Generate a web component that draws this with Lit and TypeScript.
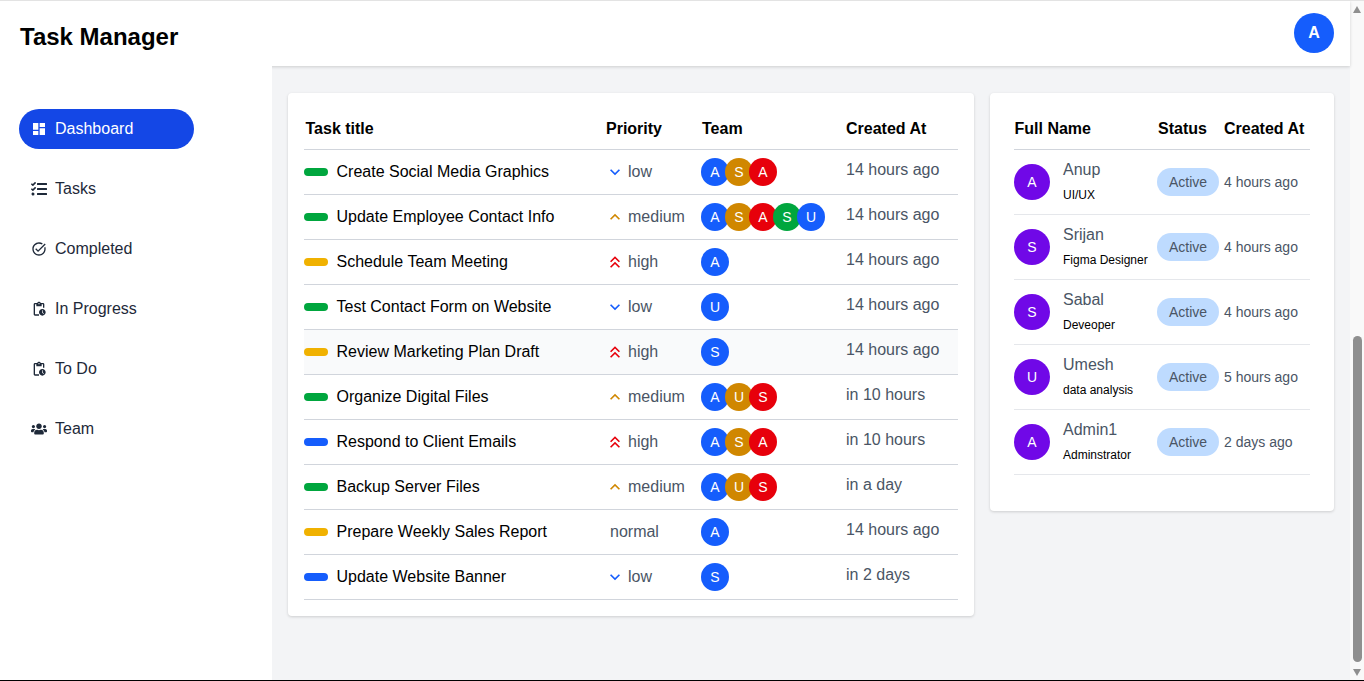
import { LitElement, html, css, svg } from "lit";
import { customElement } from "lit/decorators.js";
import { classMap } from "lit/directives/class-map.js";

const icons = {
  dashboard: svg`<svg viewBox="0 0 24 24"><path d="M3 13h8V3H3v10zm0 8h8v-6H3v6zm10 0h8V11h-8v10zm0-18v6h8V3h-8z"/></svg>`,
  tasks: svg`<svg viewBox="0 0 512 512"><path d="M139.61 35.5a12 12 0 0 0-17 0L58.93 98.81l-22.7-22.12a12 12 0 0 0-17 0L3.53 92.41a12 12 0 0 0 0 17l47.59 47.4a12.78 12.78 0 0 0 17.61 0l15.59-15.62L156.52 69a12.09 12.09 0 0 0 .09-17zm0 159.19a12 12 0 0 0-17 0l-63.68 63.72-22.7-22.1a12 12 0 0 0-17 0L3.53 252a12 12 0 0 0 0 17L51 316.5a12.77 12.77 0 0 0 17.6 0l15.7-15.69 72.2-72.22a12 12 0 0 0 .09-16.9zM64 368c-26.49 0-48.59 21.5-48.59 48S37.53 464 64 464a48 48 0 0 0 0-96zm432 16H208a16 16 0 0 0-16 16v32a16 16 0 0 0 16 16h288a16 16 0 0 0 16-16v-32a16 16 0 0 0-16-16zm0-320H208a16 16 0 0 0-16 16v32a16 16 0 0 0 16 16h288a16 16 0 0 0 16-16V80a16 16 0 0 0-16-16zm0 160H208a16 16 0 0 0-16 16v32a16 16 0 0 0 16 16h288a16 16 0 0 0 16-16v-32a16 16 0 0 0-16-16z"/></svg>`,
  done: svg`<svg viewBox="0 0 24 24"><path d="M22 5.18 10.59 16.6l-4.24-4.24 1.41-1.41 2.83 2.83 10-10L22 5.18zm-2.21 5.04c.13.57.21 1.17.21 1.78 0 4.42-3.58 8-8 8s-8-3.58-8-8 3.58-8 8-8c1.58 0 3.04.46 4.28 1.25l1.44-1.44A9.9 9.9 0 0 0 12 2C6.48 2 2 6.48 2 12s4.48 10 10 10 10-4.48 10-10c0-1.19-.22-2.33-.6-3.39l-1.61 1.61z"/></svg>`,
  pending: svg`<svg viewBox="0 0 24 24"><path d="M17 12c-2.76 0-5 2.24-5 5s2.24 5 5 5 5-2.24 5-5-2.24-5-5-5zm1.65 7.35L16.5 17.2V14h1v2.79l1.85 1.85-.7.71zM18 3h-3.18C14.4 1.84 13.3 1 12 1s-2.4.84-2.82 2H6c-1.1 0-2 .9-2 2v15c0 1.1.9 2 2 2h6v-2H6V5h2v3h8V5h2v5h2V5c0-1.1-.9-2-2-2zm-6 2c-.55 0-1-.45-1-1s.45-1 1-1 1 .45 1 1-.45 1-1 1z"/></svg>`,
  team: svg`<svg viewBox="0 0 640 512"><path d="M96 224c35.3 0 64-28.7 64-64s-28.7-64-64-64-64 28.7-64 64 28.7 64 64 64zm448 0c35.3 0 64-28.7 64-64s-28.7-64-64-64-64 28.7-64 64 28.7 64 64 64zm32 32h-64c-17.6 0-33.5 7.1-45.1 18.6 40.3 22.1 68.9 62 75.1 109.4h66c17.7 0 32-14.3 32-32v-32c0-35.3-28.7-64-64-64zm-256 0c61.9 0 112-50.1 112-112S381.9 32 320 32 208 82.1 208 144s50.1 112 112 112zm76.8 32h-8.3c-20.8 10-43.9 16-68.5 16s-47.6-6-68.5-16h-8.3C179.6 288 128 339.6 128 403.2V432c0 26.5 21.5 48 48 48h288c26.5 0 48-21.5 48-48v-28.8c0-63.6-51.6-115.2-115.2-115.2zm-223.7-13.4C161.5 263.1 145.6 256 128 256H64c-35.3 0-64 28.7-64 64v32c0 17.7 14.3 32 32 32h65.9c6.3-47.4 34.9-87.3 75.2-109.4z"/></svg>`,
  low: svg`<svg viewBox="0 0 24 24"><path d="M7.41 8.59 12 13.17l4.59-4.58L18 10l-6 6-6-6 1.41-1.41z"/></svg>`,
  medium: svg`<svg viewBox="0 0 24 24"><path d="M7.41 15.41 12 10.83l4.59 4.58L18 14l-6-6-6 6z"/></svg>`,
  high: svg`<svg viewBox="0 0 24 24"><path d="M6 17.59 7.41 19 12 14.42 16.59 19 18 17.59l-6-6z"/><path d="M6 11 7.41 12.41 12 7.83l4.59 4.58L18 11l-6-6z"/></svg>`,
};

const nav = [
  { label: "Dashboard", icon: icons.dashboard, active: true },
  { label: "Tasks", icon: icons.tasks },
  { label: "Completed", icon: icons.done },
  { label: "In Progress", icon: icons.pending },
  { label: "To Do", icon: icons.pending },
  { label: "Team", icon: icons.team },
];

const tasks = [
  { title: "Create Social Media Graphics", stage: "green", priority: "low", team: "ASA", created: "14 hours ago" },
  { title: "Update Employee Contact Info", stage: "green", priority: "medium", team: "ASASU", created: "14 hours ago" },
  { title: "Schedule Team Meeting", stage: "yellow", priority: "high", team: "A", created: "14 hours ago" },
  { title: "Test Contact Form on Website", stage: "green", priority: "low", team: "U", created: "14 hours ago" },
  { title: "Review Marketing Plan Draft", stage: "yellow", priority: "high", team: "S", created: "14 hours ago", hover: true },
  { title: "Organize Digital Files", stage: "green", priority: "medium", team: "AUS", created: "in 10 hours" },
  { title: "Respond to Client Emails", stage: "blue", priority: "high", team: "ASA", created: "in 10 hours" },
  { title: "Backup Server Files", stage: "green", priority: "medium", team: "AUS", created: "in a day" },
  { title: "Prepare Weekly Sales Report", stage: "yellow", priority: "normal", team: "A", created: "14 hours ago" },
  { title: "Update Website Banner", stage: "blue", priority: "low", team: "S", created: "in 2 days" },
];

const users = [
  { name: "Anup", role: "UI/UX", created: "4 hours ago" },
  { name: "Srijan", role: "Figma Designer", created: "4 hours ago" },
  { name: "Sabal", role: "Deveoper", created: "4 hours ago" },
  { name: "Umesh", role: "data analysis", created: "5 hours ago" },
  { name: "Admin1", role: "Adminstrator", created: "2 days ago" },
];

const teamColors = ["blue", "amber", "red", "green", "blue"];

@customElement("app-root")
export class AppRoot extends LitElement {
  static styles = css`
    :host {
      display: flex;
      height: 681px;
      box-sizing: border-box;
      border-top: 1px solid #e3e3e3;
      border-bottom: 1px solid #000;
      overflow: hidden;
      font-family: "Liberation Sans", Arial, sans-serif;
      font-size: 16px;
      color: #000;
      background: #fff;
    }
    svg {
      display: block;
      fill: currentColor;
    }
    .page {
      flex: 1;
      display: flex;
      flex-direction: column;
      min-width: 0;
    }
    .topbar {
      height: 65px;
      flex: none;
      display: flex;
      align-items: center;
      justify-content: space-between;
      padding: 0 16px 0 20px;
      background: #fff;
      box-shadow: 0 1px 3px rgba(0, 0, 0, 0.16);
      position: relative;
      z-index: 1;
    }
    .brand {
      font-size: 24px;
      font-weight: 700;
      padding-top: 6px;
    }
    .me {
      width: 40px;
      height: 40px;
      border-radius: 50%;
      background: #155dfc;
      color: #fff;
      font-weight: 700;
      display: flex;
      align-items: center;
      justify-content: center;
      margin-top: -1px;
    }
    .body {
      flex: 1;
      display: flex;
      min-height: 0;
    }
    .side {
      width: 272px;
      flex: none;
      display: flex;
      flex-direction: column;
      gap: 20px;
      padding: 43px 0 0 19px;
      box-sizing: border-box;
      background: #fff;
      position: relative;
      z-index: 2;
    }
    .link {
      width: 175px;
      height: 40px;
      box-sizing: border-box;
      display: flex;
      align-items: center;
      gap: 8px;
      padding: 0 12px;
      border-radius: 20px;
      color: #1e2939;
    }
    .link svg {
      width: 16px;
      height: 16px;
    }
    .link.active {
      background: #1447e6;
      color: #fff;
    }
    .main {
      flex: 1;
      display: flex;
      align-items: flex-start;
      gap: 16px;
      padding: 27px 16px 0 16px;
      background: #f3f4f6;
      min-width: 0;
    }
    .card {
      background: #fff;
      border-radius: 4px;
      box-shadow: 0 1px 3px rgba(0, 0, 0, 0.16);
      box-sizing: border-box;
    }
    .tasks {
      width: 686px;
      height: 523px;
      padding: 16px;
    }
    .people {
      width: 344px;
      height: 418px;
      padding: 16px 24px;
    }
    table {
      width: 100%;
      table-layout: fixed;
      border-collapse: collapse;
    }
    th {
      padding: 0;
      height: 40px;
      text-align: left;
      font-weight: 700;
      border-bottom: 1px solid #d1d5dc;
    }
    td {
      padding: 0;
      border-bottom: 1px solid #d1d5dc;
    }
    .tasks td {
      height: 44px;
    }
    .tasks th:first-child {
      padding-left: 1.5px;
    }
    .tasks tr.hover td {
      background: #f9fafb;
    }
    .people th:first-child {
      padding-left: 0.5px;
    }
    .people th:nth-child(2) {
      padding-left: 1px;
    }
    .people td {
      height: 64px;
      border-bottom-color: #e5e7eb;
    }
    .title,
    .level {
      display: flex;
      align-items: center;
    }
    .title {
      gap: 8.5px;
    }
    .bar {
      width: 24px;
      height: 8px;
      border-radius: 4px;
    }
    .level {
      color: #4a5565;
      gap: 3px;
      padding-left: 4px;
    }
    .level svg {
      width: 20px;
      height: 20px;
      margin-left: -5px;
    }
    .time {
      display: block;
      color: #4a5565;
      margin-top: -4px;
    }
    .team {
      display: flex;
      margin-left: -1px;
    }
    .dot {
      width: 28px;
      height: 28px;
      flex: none;
      margin-right: -4px;
      border-radius: 50%;
      color: #fff;
      font-size: 14px;
      display: flex;
      align-items: center;
      justify-content: center;
    }
    .blue {
      background: #155dfc;
    }
    .amber {
      background: #d08700;
    }
    .red {
      background: #e7000b;
    }
    .green {
      background: #00a63e;
    }
    .yellow {
      background: #f0b100;
    }
    .level.low svg {
      color: #155dfc;
    }
    .level.medium svg {
      color: #d08700;
    }
    .level.high svg {
      color: #e7000b;
    }
    .who {
      display: flex;
      align-items: center;
      gap: 13px;
    }
    .face {
      width: 36px;
      height: 36px;
      flex: none;
      border-radius: 50%;
      background: #7008e7;
      color: #fff;
      font-size: 14px;
      display: flex;
      align-items: center;
      justify-content: center;
    }
    .name {
      color: #4a5565;
      line-height: 24px;
    }
    .role {
      font-size: 12px;
      line-height: 24px;
      margin-top: 1px;
      white-space: nowrap;
    }
    .pill {
      width: 62px;
      height: 28px;
      border-radius: 14px;
      background: #bedbff;
      color: #4a5565;
      font-size: 14px;
      display: flex;
      align-items: center;
      justify-content: center;
    }
    .ago {
      color: #4a5565;
      font-size: 14px;
    }
    .track {
      width: 14px;
      flex: none;
      background: #f9f9f9;
      display: flex;
      flex-direction: column;
      justify-content: space-between;
      padding: 5px 0 4px 3px;
      box-sizing: border-box;
      position: relative;
    }
    .arrow {
      width: 0;
      height: 0;
      border-left: 4.5px solid transparent;
      border-right: 4.5px solid transparent;
    }
    .arrow.up {
      border-bottom: 7px solid #8f8f8f;
    }
    .arrow.down {
      border-top: 7px solid #8f8f8f;
    }
    .thumb {
      position: absolute;
      left: 3px;
      right: 2px;
      top: 335px;
      bottom: 18px;
      border-radius: 5px;
      background: #8f8f8f;
    }
  `;

  render() {
    return html`
      <div class="page">
        <header class="topbar">
          <div class="brand">Task Manager</div>
          <div class="me">A</div>
        </header>
        <div class="body">
          <nav class="side">
            ${nav.map(
              (item) => html`
                <div class=${classMap({ link: true, active: !!item.active })}>
                  ${item.icon}<span>${item.label}</span>
                </div>
              `
            )}
          </nav>
          <main class="main">
            <section class="card tasks">${this.renderTasks()}</section>
            <section class="card people">${this.renderUsers()}</section>
          </main>
        </div>
      </div>
      <div class="track">
        <div class="arrow up"></div>
        <div class="thumb"></div>
        <div class="arrow down"></div>
      </div>
    `;
  }

  renderTasks() {
    return html`
      <table>
        <colgroup>
          <col style="width: 302px" />
          <col style="width: 96px" />
          <col style="width: 144px" />
          <col />
        </colgroup>
        <thead>
          <tr>
            <th>Task title</th>
            <th>Priority</th>
            <th>Team</th>
            <th>Created At</th>
          </tr>
        </thead>
        <tbody>
          ${tasks.map(
            (task) => html`
              <tr class=${task.hover ? "hover" : ""}>
                <td>
                  <div class="title">
                    <div class="bar ${task.stage}"></div>
                    <span>${task.title}</span>
                  </div>
                </td>
                <td>
                  <div class="level ${task.priority}">
                    ${icons[task.priority as keyof typeof icons]}
                    <span>${task.priority}</span>
                  </div>
                </td>
                <td>
                  <div class="team">
                    ${[...task.team].map(
                      (initial, i) => html`<div class="dot ${teamColors[i]}">${initial}</div>`
                    )}
                  </div>
                </td>
                <td><span class="time">${task.created}</span></td>
              </tr>
            `
          )}
        </tbody>
      </table>
    `;
  }

  renderUsers() {
    return html`
      <table>
        <colgroup>
          <col style="width: 143px" />
          <col style="width: 67px" />
          <col />
        </colgroup>
        <thead>
          <tr>
            <th>Full Name</th>
            <th>Status</th>
            <th>Created At</th>
          </tr>
        </thead>
        <tbody>
          ${users.map(
            (user) => html`
              <tr>
                <td>
                  <div class="who">
                    <div class="face">${user.name[0]}</div>
                    <div>
                      <div class="name">${user.name}</div>
                      <div class="role">${user.role}</div>
                    </div>
                  </div>
                </td>
                <td><div class="pill">Active</div></td>
                <td class="ago">${user.created}</td>
              </tr>
            `
          )}
        </tbody>
      </table>
    `;
  }
}
